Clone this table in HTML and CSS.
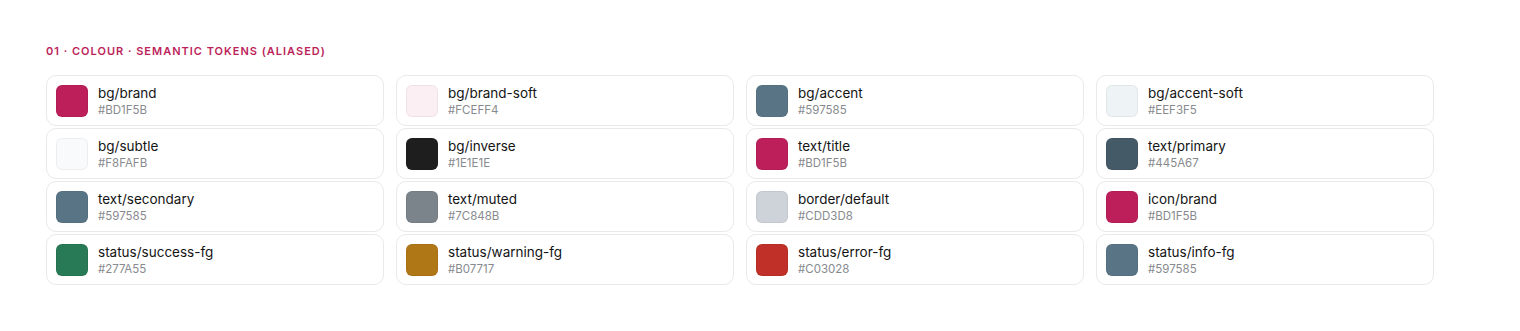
FILE: index.html
```html
<!DOCTYPE html>
<html lang="en">
<head>
    <meta charset="UTF-8">
    <title>Semantic tokens</title>
    <link rel="stylesheet" href="styles.css">
</head>
<body>
    <section class="tokens">
        <h2 class="section-title">01 · Colour · Semantic tokens (aliased)</h2>
        <div class="token-grid" id="tokenGrid"></div>
    </section>
    <script>
        const tokens = [
            ['bg/brand', '#BD1F5B'],
            ['bg/brand-soft', '#FCEFF4'],
            ['bg/accent', '#597585'],
            ['bg/accent-soft', '#EEF3F5'],
            ['bg/subtle', '#F8FAFB'],
            ['bg/inverse', '#1E1E1E'],
            ['text/title', '#BD1F5B'],
            ['text/primary', '#445A67'],
            ['text/secondary', '#597585'],
            ['text/muted', '#7C848B'],
            ['border/default', '#CDD3D8'],
            ['icon/brand', '#BD1F5B'],
            ['status/success-fg', '#277A55'],
            ['status/warning-fg', '#B07717'],
            ['status/error-fg', '#C03028'],
            ['status/info-fg', '#597585']
        ];

        const grid = document.getElementById('tokenGrid');
        tokens.forEach(([name, hex]) => {
            const card = document.createElement('div');
            card.className = 'token-card';
            card.innerHTML = `
                <span class="swatch" style="background: ${hex}"></span>
                <div class="token-info">
                    <div class="token-name">${name}</div>
                    <div class="token-hex">${hex}</div>
                </div>`;
            grid.appendChild(card);
        });
    </script>
</body>
</html>
```

FILE: styles.css
```css
body {
    margin: 0;
    padding: 0;
    background: #ffffff;
    font-family: 'Inter', 'Noto Sans', sans-serif;
    color: #1a1a1a;
}

.tokens {
    padding: 44px 45px 0 46px;
}

.section-title {
    margin: 0 0 17px;
    font-size: 11px;
    font-weight: 600;
    letter-spacing: 1px;
    text-transform: uppercase;
    color: #bd1f5b;
    line-height: 14px;
}

.token-grid {
    display: grid;
    grid-template-columns: repeat(4, 338px);
    column-gap: 12px;
    row-gap: 2px;
}

.token-card {
    display: flex;
    align-items: center;
    gap: 10px;
    height: 51px;
    box-sizing: border-box;
    padding: 0 9px;
    border: 1px solid #e8e9eb;
    border-radius: 10px;
    background: #fff;
}

.swatch {
    width: 32px;
    height: 32px;
    flex: none;
    border-radius: 6px;
    box-shadow: inset 0 0 0 1px rgba(0, 0, 0, 0.05);
}

.token-name {
    font-size: 13.5px;
    line-height: 17px;
    color: #141414;
}

.token-hex {
    margin-top: 1px;
    font-size: 11.5px;
    line-height: 14px;
    color: #878a8e;
}
```
